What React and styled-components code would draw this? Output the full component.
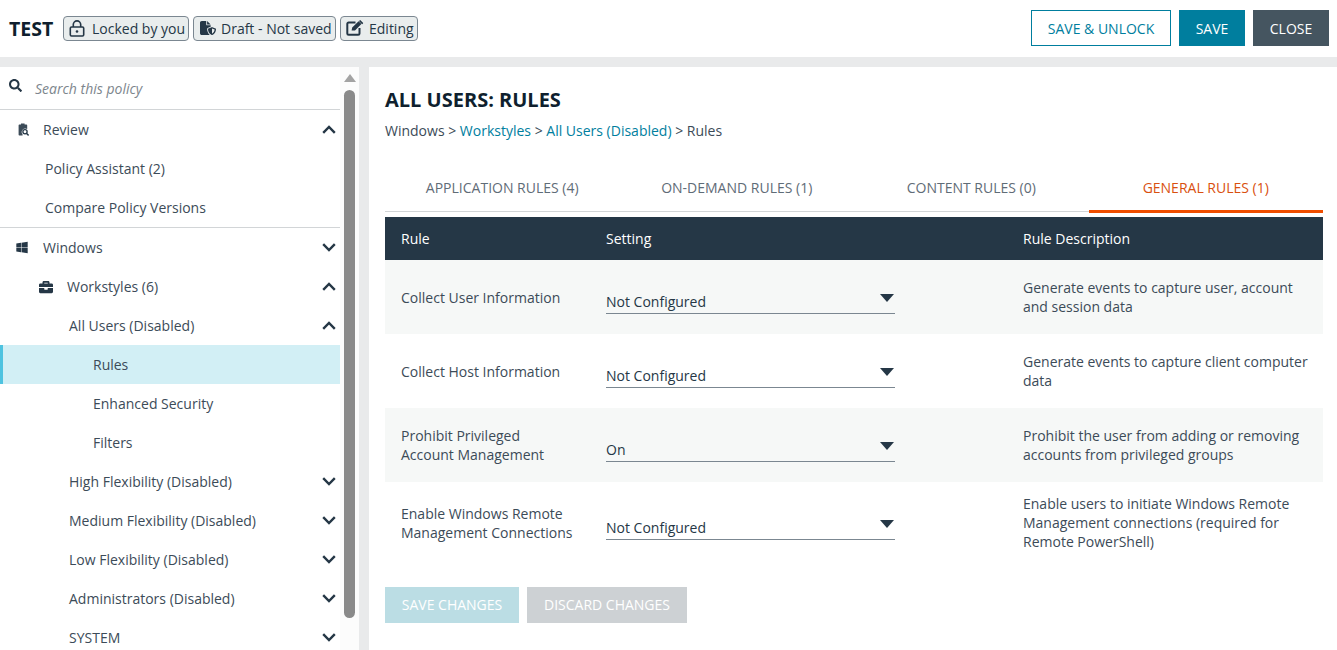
import React from 'react'
import styled, { createGlobalStyle } from 'styled-components'
import { FaSearch, FaWindows, FaBriefcase } from 'react-icons/fa'
import { FaFileShield } from 'react-icons/fa6'

const Global = createGlobalStyle`
  html, body { margin:0; padding:0; height:100%; overflow:hidden; background:#e9eaeb; }
  body { font-family:'Open Sans', sans-serif; font-size:14px; color:#253746; }
  * { box-sizing:border-box; }
`
const Page = styled.div`
  width:1337px;
  height:650px;
  display:flex;
  flex-direction:column;
  overflow:hidden;
`
const TopBar = styled.header`
  flex:0 0 57px;
  background:#fff;
  display:flex;
  align-items:center;
  justify-content:space-between;
  padding:0 8px 1px 9px;
`
const TopLeft = styled.div`
  display:flex;
  align-items:center;
  gap:4px;
`
const PolicyName = styled.div`
  width:50px;
  font-size:19.5px;
  font-weight:700;
  color:#0f1f2e;
`
const Badge = styled.div`
  height:25px;
  width:${p => p.$w}px;
  display:flex;
  align-items:center;
  padding-left:${p => p.$pad}px;
  gap:${p => p.$gap}px;
  background:#e9eded;
  border:1px solid #7b8791;
  border-radius:4px;
  font-size:14px;
  color:#253746;
  white-space:nowrap;
  svg { flex:none; }
`
const TopRight = styled.div`
  display:flex;
  gap:8px;
`
const TopButton = styled.button`
  height:36px;
  width:${p => p.$w}px;
  font:14px 'Open Sans', sans-serif;
  background:${p => p.$bg};
  color:${p => p.$fg};
  border:${p => p.$outline ? '1px solid #007e9e' : 'none'};
  padding:0;
`
const Body = styled.div`
  flex:1;
  min-height:0;
  margin-top:10px;
  display:flex;
  gap:10px;
`
const Sidebar = styled.aside`
  flex:0 0 359px;
  background:#fff;
  display:flex;
  overflow:hidden;
`
const Tree = styled.nav`
  flex:0 0 340px;
  display:flex;
  flex-direction:column;
`
const SearchBox = styled.div`
  flex:0 0 43px;
  display:flex;
  align-items:center;
  border-bottom:1px solid #d2d5d7;
  padding:0 0 0 9px;
  gap:13px;
  svg { margin-top:-6px; }
`
const SearchHint = styled.span`
  font-style:italic;
  font-size:14px;
  color:#7d868d;
`
const Row = styled.div`
  flex:0 0 ${p => p.$divider ? 40 : 39}px;
  display:flex;
  align-items:center;
  justify-content:space-between;
  padding:0 4px 0 ${p => p.$indent}px;
  color:#3c4b58;
  background:${p => p.$active ? '#d2eff5' : 'transparent'};
  border-left:${p => p.$active ? '3px solid #4ec3e0' : 'none'};
  border-bottom:${p => p.$divider ? '1px solid #d2d5d7' : 'none'};
`
const RowLabel = styled.div`
  display:flex;
  align-items:center;
  gap:${p => p.$gap || 0}px;
`
const IconSlot = styled.span`
  width:${p => p.$w || 12}px;
  height:14px;
  display:flex;
  align-items:center;
  justify-content:center;
  color:#253746;
`
const Scrollbar = styled.div`
  flex:1;
  background:#fcfcfc;
  display:flex;
  flex-direction:column;
  align-items:center;
  padding-top:7px;
`
const ScrollUp = styled.div`
  width:0;
  height:0;
  border-left:6.5px solid transparent;
  border-right:6.5px solid transparent;
  border-bottom:8px solid #a3a3a3;
`
const ScrollThumb = styled.div`
  width:11px;
  height:528px;
  margin-top:8px;
  border-radius:6px;
  background:#8a8a8a;
`
const Main = styled.main`
  flex:1;
  background:#fff;
  padding:20px 14px 0 16px;
  display:flex;
  flex-direction:column;
`
const Title = styled.h1`
  margin:0;
  font-size:20px;
  line-height:26px;
  font-weight:700;
  color:#0f1f2e;
`
const Crumbs = styled.div`
  margin-top:8px;
  line-height:19px;
  color:#3c4b58;
  a { color:#007e9e; text-decoration:none; }
`
const Tabs = styled.div`
  margin-top:25px;
  height:47px;
  display:grid;
  grid-template-columns:repeat(4, 1fr);
  align-items:start;
  border-bottom:1px solid #d2d5d7;
`
const Tab = styled.div`
  height:${p => p.$active ? 48 : 44}px;
  display:flex;
  align-items:center;
  justify-content:center;
  font-size:14px;
  color:${p => p.$active ? '#d9500f' : '#5f6c77'};
  border-bottom:${p => p.$active ? '3px solid #f04e00' : 'none'};
`
const Head = styled.div`
  margin-top:5px;
  height:43px;
  background:#253746;
  color:#fff;
  display:grid;
  grid-template-columns:205px 417px 1fr;
  align-items:center;
  padding-left:16px;
`
const RuleRow = styled.div`
  height:${p => p.$h}px;
  background:${p => p.$shaded ? '#f6f8f7' : '#fff'};
  display:grid;
  grid-template-columns:205px 417px 1fr;
  align-items:center;
  padding-left:16px;
  line-height:19px;
  color:#3c4b58;
`
const RuleName = styled.div`
  max-width:174px;
`
const Select = styled.div`
  width:289px;
  height:27px;
  margin-top:7px;
  padding-top:4px;
  border-bottom:1px solid #7b8791;
  display:flex;
  align-items:flex-start;
  justify-content:space-between;
  color:#253746;
  line-height:22px;
`
const Caret = styled.span`
  width:0;
  height:0;
  margin:3px 1px 0 0;
  border-left:7.5px solid transparent;
  border-right:7.5px solid transparent;
  border-top:8px solid #253746;
`
const Desc = styled.div`
  padding-right:12px;
`
const Actions = styled.div`
  margin-top:24px;
  display:flex;
  gap:8px;
`
const ActionButton = styled.button`
  height:36px;
  width:${p => p.$w}px;
  border:none;
  padding:0 0 2px;
  font:14px 'Open Sans', sans-serif;
  color:#fff;
  background:${p => p.$bg};
`

const Chevron = ({ up }) => (
  <svg width="14" height="9" viewBox="0 0 14 9" fill="none" stroke="#253746" strokeWidth="2.4">
    <path d={up ? 'M1.2 7.8 7 2l5.8 5.8' : 'M1.2 1.2 7 7l5.8-5.8'} />
  </svg>
)

const LockIcon = () => (
  <svg width="16" height="17" viewBox="0 0 16 17" fill="none" stroke="#253746" strokeWidth="1.6">
    <path d="M4.3 7V4.6a3.7 3.7 0 0 1 7.4 0V7" />
    <rect x="1.3" y="7" width="13.4" height="9" rx="1.2" />
    <circle cx="8" cy="11.5" r="1.3" fill="#253746" stroke="none" />
  </svg>
)

const EditIcon = () => (
  <svg width="18" height="16" viewBox="0 0 18 16" fill="none">
    <path d="M9.5 2.6H2.6a1.3 1.3 0 0 0-1.3 1.3v9.5a1.3 1.3 0 0 0 1.3 1.3h9.6a1.3 1.3 0 0 0 1.3-1.3V8" stroke="#253746" strokeWidth="2" />
    <path d="M5.6 10.6 6.2 7.6 12.6 1.2 15.4 4 9 10.4zM13.5.4l.7-.4 3 3-.4.8-.7.5-3-3z" fill="#253746" />
  </svg>
)

const ReviewIcon = () => (
  <svg width="11" height="13" viewBox="0 0 11 13">
    <path d="M3 1.4V.4h3.6v1h1.8a.8.8 0 0 1 .8.8V6a3.6 3.6 0 0 0-4.6 5.4V12.6H1.4a.8.8 0 0 1-.8-.8V2.2a.8.8 0 0 1 .8-.8z" fill="#3c4b58" />
    <circle cx="7" cy="8.8" r="2.1" fill="none" stroke="#253746" strokeWidth="1.3" />
    <path d="m8.6 10.4 2 2" stroke="#253746" strokeWidth="1.4" />
  </svg>
)

const treeRows = [
  { label: 'Policy Assistant (2)', indent: 45 },
  { label: 'Compare Policy Versions', indent: 45, divider: true },
]
const lowerRows = ['High Flexibility (Disabled)', 'Medium Flexibility (Disabled)', 'Low Flexibility (Disabled)', 'Administrators (Disabled)', 'SYSTEM']

const rules = [
  { name: 'Collect User Information', value: 'Not Configured', desc: 'Generate events to capture user, account and session data', shaded: true, h: 74 },
  { name: 'Collect Host Information', value: 'Not Configured', desc: 'Generate events to capture client computer data', h: 74 },
  { name: 'Prohibit Privileged Account Management', value: 'On', desc: 'Prohibit the user from adding or removing accounts from privileged groups', shaded: true, h: 74 },
  { name: 'Enable Windows Remote Management Connections', value: 'Not Configured', desc: 'Enable users to initiate Windows Remote Management connections (required for Remote PowerShell)', h: 81 },
]

const App = () => {
  return (
    <Page>
      <Global />
      <TopBar>
        <TopLeft>
          <PolicyName>TEST</PolicyName>
          <Badge $w={126} $pad={5} $gap={7}><LockIcon />Locked by you</Badge>
          <Badge $w={143} $pad={6} $gap={5}><FaFileShield size={16} color="#253746" />Draft - Not saved</Badge>
          <Badge $w={78} $pad={5} $gap={5}><EditIcon />Editing</Badge>
        </TopLeft>
        <TopRight>
          <TopButton $w={140} $bg="#fff" $fg="#007e9e" $outline>SAVE &amp; UNLOCK</TopButton>
          <TopButton $w={66} $bg="#007e9e" $fg="#fff">SAVE</TopButton>
          <TopButton $w={76} $bg="#455560" $fg="#fff">CLOSE</TopButton>
        </TopRight>
      </TopBar>
      <Body>
        <Sidebar>
          <Tree>
            <SearchBox>
              <FaSearch size={13} color="#253746" />
              <SearchHint>Search this policy</SearchHint>
            </SearchBox>
            <Row $indent={17}>
              <RowLabel $gap={14}><IconSlot><ReviewIcon /></IconSlot>Review</RowLabel>
              <Chevron up />
            </Row>
            {treeRows.map(r => (
              <Row key={r.label} $indent={r.indent} $divider={r.divider}>{r.label}</Row>
            ))}
            <Row $indent={16}>
              <RowLabel $gap={15}><IconSlot><FaWindows size={13} /></IconSlot>Windows</RowLabel>
              <Chevron />
            </Row>
            <Row $indent={39}>
              <RowLabel $gap={14}><IconSlot $w={14}><FaBriefcase size={14} /></IconSlot>Workstyles (6)</RowLabel>
              <Chevron up />
            </Row>
            <Row $indent={69}>All Users (Disabled)<Chevron up /></Row>
            <Row $indent={90} $active>Rules</Row>
            <Row $indent={93}>Enhanced Security</Row>
            <Row $indent={93}>Filters</Row>
            {lowerRows.map(label => (
              <Row key={label} $indent={69}>{label}<Chevron /></Row>
            ))}
          </Tree>
          <Scrollbar>
            <ScrollUp />
            <ScrollThumb />
          </Scrollbar>
        </Sidebar>
        <Main>
          <Title>ALL USERS: RULES</Title>
          <Crumbs>Windows &gt; <a href="#w">Workstyles</a> &gt; <a href="#u">All Users (Disabled)</a> &gt; Rules</Crumbs>
          <Tabs>
            <Tab>APPLICATION RULES (4)</Tab>
            <Tab>ON-DEMAND RULES (1)</Tab>
            <Tab>CONTENT RULES (0)</Tab>
            <Tab $active>GENERAL RULES (1)</Tab>
          </Tabs>
          <Head>
            <div>Rule</div>
            <div>Setting</div>
            <div>Rule Description</div>
          </Head>
          {rules.map(r => (
            <RuleRow key={r.name} $shaded={r.shaded} $h={r.h}>
              <RuleName>{r.name}</RuleName>
              <Select>{r.value}<Caret /></Select>
              <Desc>{r.desc}</Desc>
            </RuleRow>
          ))}
          <Actions>
            <ActionButton $w={134} $bg="#bbdde4">SAVE CHANGES</ActionButton>
            <ActionButton $w={160} $bg="#cdd1d4">DISCARD CHANGES</ActionButton>
          </Actions>
        </Main>
      </Body>
    </Page>
  )
}

export default App
